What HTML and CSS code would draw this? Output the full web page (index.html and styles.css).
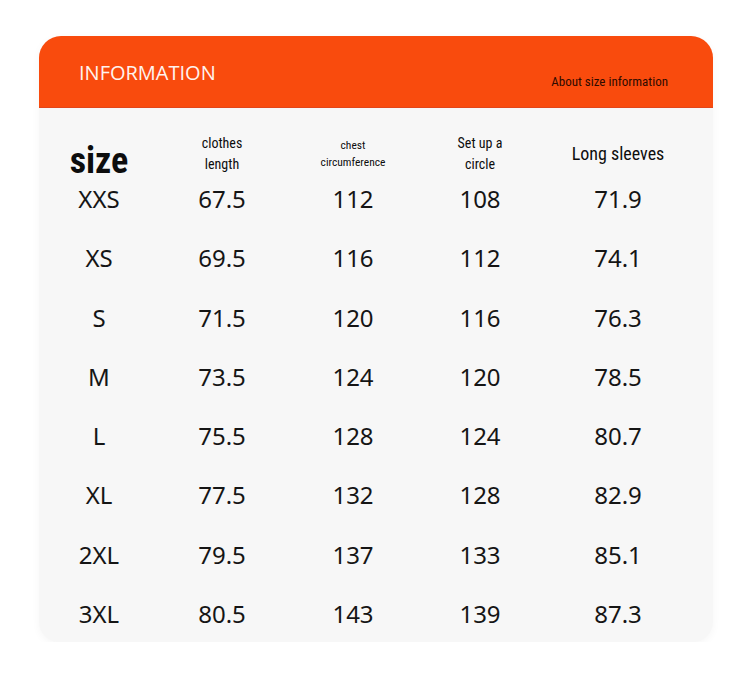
FILE: index.html
```html
<!DOCTYPE html>
<html lang="en">
<head>
  <meta charset="UTF-8" />
  <meta name="viewport" content="width=device-width, initial-scale=1.0"/>
  <title>Size information</title>
  <link rel="stylesheet" href="styles.css">
</head>
<body>
  <div class="tarjeta">
    <header class="cabecera">
      <span class="titulo">INFORMATION</span>
      <span class="subtitulo">About size information</span>
    </header>

    <div class="tabla">
      <div class="fila encabezado">
        <span class="col-talla">size</span>
        <span class="etiqueta">clothes<br>length</span>
        <span class="etiqueta pequena">chest<br>circumference</span>
        <span class="etiqueta">Set up a<br>circle</span>
        <span class="etiqueta grande">Long sleeves</span>
      </div>

      <div class="filas">
        <div class="fila"><span>XXS</span><span>67.5</span><span>112</span><span>108</span><span>71.9</span></div>
        <div class="fila"><span>XS</span><span>69.5</span><span>116</span><span>112</span><span>74.1</span></div>
        <div class="fila"><span>S</span><span>71.5</span><span>120</span><span>116</span><span>76.3</span></div>
        <div class="fila"><span>M</span><span>73.5</span><span>124</span><span>120</span><span>78.5</span></div>
        <div class="fila"><span>L</span><span>75.5</span><span>128</span><span>124</span><span>80.7</span></div>
        <div class="fila"><span>XL</span><span>77.5</span><span>132</span><span>128</span><span>82.9</span></div>
        <div class="fila"><span>2XL</span><span>79.5</span><span>137</span><span>133</span><span>85.1</span></div>
        <div class="fila"><span>3XL</span><span>80.5</span><span>143</span><span>139</span><span>87.3</span></div>
      </div>
    </div>
  </div>
</body>
</html>
```

FILE: styles.css
```css
body {
  margin: 0;
  background-color: #ffffff;
  font-family: 'Noto Sans', sans-serif;
  color: #151515;
}

.tarjeta {
  width: 674px;
  margin: 36px 0 0 39px;
  background-color: #f7f7f7;
  border-radius: 22px 22px 20px 20px;
  box-shadow: 0 2px 8px rgba(0,0,0,0.04);
  overflow: hidden;
}

.cabecera {
  height: 72px;
  background-color: #f94b0d;
  border-bottom: 1px solid #e2451a;
  box-sizing: border-box;
  display: flex;
  justify-content: space-between;
  padding: 0 45px 0 40px;
}

.titulo {
  font-family: 'Open Sans', sans-serif;
  font-size: 20px;
  color: #fff3ee;
  margin-top: 24px;
  line-height: 26px;
}

/* textos estrechos */
.subtitulo,
.col-talla,
.etiqueta {
  font-family: 'Roboto Condensed', 'DejaVu Sans', sans-serif;
  font-stretch: condensed;
}

.subtitulo {
  font-size: 13px;
  color: #2e0a00;
  margin-top: 37px;
  line-height: 18px;
}

.tabla {
  padding: 19px 0 16px 0;
}

.fila {
  display: grid;
  grid-template-columns: 120px 126px 136px 118px 158px;
  text-align: center;
  font-size: 24px;
  line-height: 24px;
}

.encabezado {
  height: 52px;
  align-items: center;
  margin-bottom: 8px;
  color: #0d0d0d;
}

.col-talla {
  font-weight: bold;
  font-size: 36px;
  line-height: 40px;
  margin-top: 14px;
}

.etiqueta {
  font-size: 14px;
  line-height: 21px;
}

.etiqueta.pequena {
  font-size: 11.5px;
  line-height: 17px;
}

.etiqueta.grande {
  font-size: 18px;
  margin-top: -2px;
}

.filas {
  display: flex;
  flex-direction: column;
  gap: 35.3px;
}
```
